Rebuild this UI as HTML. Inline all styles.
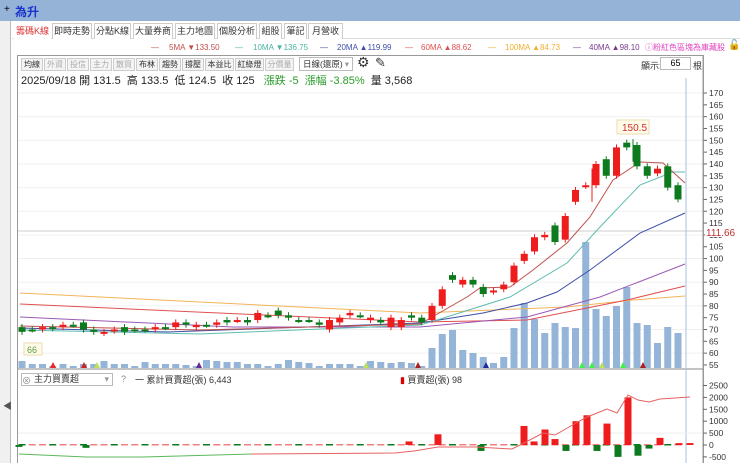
<!DOCTYPE html><html><head><meta charset="utf-8"><style>
*{margin:0;padding:0;box-sizing:border-box}
body{width:740px;height:463px;overflow:hidden;background:#fff;font-family:"Liberation Sans","Noto Sans CJK TC",sans-serif;position:relative}
.a{position:absolute;white-space:nowrap}
.tab{position:absolute;top:23px;height:16px;border:1px solid #ccc;border-bottom:none;font-size:9px;line-height:14px;text-align:center;color:#333;background:#fff;overflow:hidden}
.btn{position:absolute;top:58px;height:13px;border:1px solid #ccc;font-size:8px;line-height:11px;text-align:center;color:#333;background:#f4f4f4;overflow:hidden}
.dis{color:#aaa}
.ma{position:absolute;top:43px;font-size:8px;line-height:10px;white-space:nowrap}
</style></head><body>
<div class="a" style="left:0;top:0;width:740px;height:21px;background:#95b3d7"></div>
<div class="a" style="left:4px;top:4px;font-size:10px;color:#000">+</div>
<div class="a" style="left:15px;top:3px;font-size:12px;font-weight:bold;color:#1a33cc">為升</div>
<div class="a" style="left:0;top:21px;width:11px;height:442px;background:#f0f0f0;border-right:1px solid #bbb"></div>
<div class="a" style="left:3px;top:399px;font-size:9px;color:#555">◀</div>
<div class="a" style="left:12px;top:38px;width:728px;height:1px;background:#ddd"></div>
<div class="tab" style="left:14px;width:37px;color:#d33;border-color:#fff">籌碼K線</div>
<div class="tab" style="left:52px;width:40px">即時走勢</div>
<div class="tab" style="left:94px;width:37px">分點K線</div>
<div class="tab" style="left:133px;width:40px">大量券商</div>
<div class="tab" style="left:175px;width:40px">主力地圖</div>
<div class="tab" style="left:217px;width:40px">個股分析</div>
<div class="tab" style="left:259px;width:23px">組股</div>
<div class="tab" style="left:284px;width:23px">筆記</div>
<div class="tab" style="left:308px;width:35px">月營收</div>
<div class="ma" style="left:151px;color:#c0504d">—</div><div class="ma" style="left:169px;color:#c0504d">5MA ▼133.50</div>
<div class="ma" style="left:235px;color:#4bb3a3">—</div><div class="ma" style="left:253px;color:#4bb3a3">10MA ▼136.75</div>
<div class="ma" style="left:320px;color:#3f4fa8">—</div><div class="ma" style="left:337px;color:#3f4fa8">20MA ▲119.99</div>
<div class="ma" style="left:405px;color:#e05050">—</div><div class="ma" style="left:421px;color:#e05050">60MA ▲88.62</div>
<div class="ma" style="left:488px;color:#f0b030">—</div><div class="ma" style="left:505px;color:#f0b030">100MA ▲84.73</div>
<div class="ma" style="left:573px;color:#7a3a90">—</div><div class="ma" style="left:589px;color:#7a3a90">40MA ▲98.10</div>
<div class="ma" style="left:645px;color:#e040c0;font-size:8px">ⓘ粉紅色區塊為庫藏股</div>
<div class="a" style="left:728px;top:40px;font-size:10px">🔓</div>
<div class="a" style="left:17px;top:55px;width:687px;height:408px;border:1px solid #999;border-bottom:none"></div>
<div class="btn" style="left:21px;width:22px">均線</div><div class="btn dis" style="left:44px;width:22px">外資</div><div class="btn dis" style="left:67px;width:22px">投信</div><div class="btn dis" style="left:90px;width:22px">主力</div><div class="btn dis" style="left:113px;width:22px">散買</div><div class="btn" style="left:136px;width:22px">布林</div><div class="btn" style="left:159px;width:22px">趨勢</div><div class="btn" style="left:182px;width:22px">撐壓</div><div class="btn" style="left:205px;width:29px">本益比</div><div class="btn" style="left:235px;width:29px">紅綠燈</div><div class="btn dis" style="left:265px;width:29px">分價量</div>
<div class="a" style="left:299px;top:57px;width:54px;height:14px;border:1px solid #bbb;font-size:8.5px;line-height:12px;padding-left:3px;color:#333">日線(還原)<span style="position:absolute;right:3px;color:#999">▾</span></div>
<div class="a" style="left:357px;top:54px;font-size:14px;color:#333">⚙</div>
<div class="a" style="left:375px;top:55px;font-size:13px;color:#333">✎</div>
<div class="a" style="left:641px;top:59px;font-size:9px;color:#333">顯示:</div>
<div class="a" style="left:660px;top:57px;width:31px;height:13px;border:1px solid #bbb;font-size:9px;line-height:11px;text-align:center">65</div>
<div class="a" style="left:693px;top:59px;font-size:9px;color:#333">根</div>
<div class="a" style="left:21px;top:72px;font-size:11px;color:#222">2025/09/18 開 131.5&nbsp; 高 133.5&nbsp; 低 124.5&nbsp; 收 125&nbsp;&nbsp; <span style="color:#2a9a2a">漲跌 -5&nbsp; 漲幅 -3.85%</span>&nbsp; 量 3,568</div>
<svg class="a" style="left:0;top:0" width="740" height="463" id="s"></svg>
<div class="a" style="left:21px;top:373px;width:92px;height:13px;border:1px solid #bbb;font-size:9px;line-height:11px;padding-left:12px;color:#333">主力買賣超<span style="position:absolute;right:3px;color:#999">▾</span></div>
<div class="a" style="left:22px;top:374px;font-size:9px;color:#888">⊗</div>
<div class="a" style="left:121px;top:374px;font-size:9px;color:#888">?</div>
<div class="a" style="left:135px;top:373px;font-size:9px;color:#333">一 累計買賣超(張) 6,443</div>
<div class="a" style="left:400px;top:373px;font-size:9px;color:#333"><span style="color:#d00">▮</span> 買賣超(張) 98</div>
<script>
var s=document.getElementById('s'),h='';
function Y(p){return 93+(170-p)*2.365}
for(var p=60;p<=170;p+=10)h+='<line x1="18" x2="703" y1="'+Y(p)+'" y2="'+Y(p)+'" stroke="#f0f0f0"/>';
h+='<line x1="18" x2="703" y1="231" y2="231" stroke="#ccc"/>';
for(var p=55;p<=170;p+=5){var y=Y(p);h+='<line x1="703" x2="707" y1="'+y+'" y2="'+y+'" stroke="#666"/><text x="709" y="'+(y+3)+'" font-size="8.5" fill="#333">'+p+'</text>';}
h+='<line x1="703" x2="703" y1="56" y2="463" stroke="#999"/>';
h+='<rect x="705" y="226" width="35" height="11" fill="#fff"/><text x="706" y="236" font-size="10" fill="#c03030">111.66</text>';
h+='<line x1="18" x2="703" y1="369" y2="369" stroke="#888"/>';
h+='<line x1="686" x2="686" y1="78" y2="463" stroke="#a8c0e0"/>';
var vL=[361,364,364,366,364,366,364,364,361,364,364,366,362,364,364,364,365,366,360,361,362,362,364,364,366,364,360,362,363,366,364,364,364,366,361,362,363];
var vR=[362,363,366,348,334,330,350,353,357,363,357,328,303,319,333,323,327,328,242,309,316,306,287,323,325,343,327,333];
var X=[];for(var k=0;k<65;k++)X.push(22+k*10.25);
var V=vL.concat(vR);
for(var k=0;k<65;k++){h+='<rect x="'+(X[k]-3.5)+'" y="'+V[k]+'" width="7" height="'+(368-V[k])+'" fill="#94b4d8"/>';}
function pl(c,pts){h+='<polyline fill="none" stroke="'+c+'" stroke-width="1" points="'+pts+'"/>';}
pl('#f2b45a','20,293 420,313 567,307 633,300 685,296');
pl('#e05050','20,304 420,322 527,320 627,300 685,286');
pl('#9b59b6','20,317 233,327 420,327 527,317 600,297 685,264');
pl('#3f4fa8','20,328 167,332 420,323 483,313 527,303 557,292 590,270 640,233 685,213');
pl('#5fbcb0','20,330 200,334 420,325 437,320 510,297 567,263 600,227 640,185 673,172 685,172');
pl('#c0504d','20,326 200,330 420,324 467,297 480,288 510,287 533,270 567,243 590,217 613,180 640,162 663,163 685,183');
var cL=[[71,69,'g'],[70,70,'g'],[71,70,'r'],[71,70.5,'g'],[72,71,'r'],[72,72,'g'],[73,70,'g'],[70,69,'g'],[69,68.5,'r'],[70,69.5,'r'],[71,69,'g'],[70,70,'g'],[70,70,'g'],[71,70,'r'],[71,71,'g'],[73,71,'r'],[73,72,'g'],[72,71,'r'],[72,72,'g'],[73,72,'r'],[74,73,'g'],[74,74,'r'],[74,73,'g'],[77,74,'r'],[76,76,'g'],[78,76,'g'],[76,75,'g'],[74,74,'g'],[74,74,'g'],[73,72,'g'],[74,70,'r'],[75,73,'r'],[77,76,'r'],[76,76,'g'],[75,74,'r'],[74,73,'g'],[75,71,'r']];
var cR=[[74,71,'r'],[76,75,'g'],[75,73,'g'],[80,74,'r'],[87,80,'r'],[93,91,'g'],[91,89,'r'],[91,89,'g'],[88,85,'g'],[86.5,86,'r'],[89,87,'r'],[97,90,'r'],[102,99,'r'],[109,103,'r'],[110,109,'r'],[114,107,'g'],[118,108,'r'],[129,124,'r'],[131,130.7,'r'],[140,131,'r'],[142,135,'g'],[147,135,'r'],[149,147,'g'],[148,139,'g'],[139,135,'g'],[138,136,'r'],[139,130,'g'],[131,125,'g']];
var C=cL.concat(cR);C=C.slice(C.length-65);
for(var k=0;k<65;k++){var c=C[k],col=c[2]=='r'?'#ee1c1c':'#0e7a1e',t=Y(c[0]),b=Y(c[1]);var hh=Math.max(2,b-t);
h+='<line x1="'+X[k]+'" x2="'+X[k]+'" y1="'+(t-3)+'" y2="'+(b+3)+'" stroke="'+col+'"/>';
h+='<rect x="'+(X[k]-3.5)+'" y="'+t+'" width="7" height="'+hh+'" fill="'+col+'"/>';}
h+='<line x1="592" x2="592" y1="'+Y(138)+'" y2="'+Y(124)+'" stroke="#ee1c1c"/><line x1="633" x2="633" y1="'+Y(150.5)+'" y2="'+Y(141)+'" stroke="#0e7a1e"/>';
h+='<rect x="617" y="120" width="32" height="14" fill="#fffbe8" stroke="#e8dcb0"/><text x="622" y="131" font-size="10" fill="#d03030">150.5</text>';
h+='<rect x="24" y="343" width="18" height="12" fill="#fffbe8" stroke="#e8dcb0"/><text x="27" y="353" font-size="9" fill="#5a9a40">66</text>';
[[53,'#e22'],[84,'#c22'],[97,'#bde05a'],[199,'#6a2a9a'],[366,'#bde05a'],[418,'#a22'],[486,'#1a2aa0'],[582,'#4e4'],[592,'#4e4'],[602,'#bde05a'],[623,'#4e4'],[643,'#a22']].forEach(function(m){h+='<polygon points="'+(m[0]-3)+',368 '+(m[0]+3)+',368 '+m[0]+',362" fill="'+m[1]+'"/>';});
function Z(v){return 445-v*0.0238}
[2500,2000,1500,1000,500,0,-500].forEach(function(v){var y=Z(v);h+='<line x1="703" x2="707" y1="'+y+'" y2="'+y+'" stroke="#666"/><text x="709" y="'+(y+3)+'" font-size="8.5" fill="#333">'+v+'</text>';if(v==500)h+='<line x1="18" x2="703" y1="'+y+'" y2="'+y+'" stroke="#eee"/>';});
for(var k=0;k<65;k++){h+='<rect x="'+(X[k]-3.5)+'" y="444" width="7" height="1.5" fill="'+(k%3==0?'#0e7a1e':'#f08080')+'"/>';}
[[409,150,'r'],[438,450,'r'],[481,-250,'g'],[524,800,'r'],[534,150,'r'],[545,650,'r'],[555,250,'r'],[566,-250,'g'],[576,1000,'r'],[587,1250,'r'],[597,-250,'g'],[607,900,'r'],[618,-500,'g'],[628,2000,'r'],[638,-450,'g'],[649,-150,'g'],[660,300,'r'],[679,80,'r'],[690,80,'r'],[86,-120,'g'],[19,-80,'g']].forEach(function(b){var y1=Z(Math.max(b[1],0)),y2=Z(Math.min(b[1],0));h+='<rect x="'+(b[0]-3.5)+'" y="'+y1+'" width="7" height="'+(y2-y1)+'" fill="'+(b[2]=='r'?'#ee1c1c':'#0e7a1e')+'"/>';});
pl('#5cb85c','19,454 86,457 143,457 252,454');
pl('#e86060','252,454 395,453 414,451 438,447 476,447 512,449 524,443 543,433 555,435 576,423 587,417 607,409 617,413 628,395 638,400 649,402 660,399 690,397');
s.innerHTML=h;
</script>
</body></html>
